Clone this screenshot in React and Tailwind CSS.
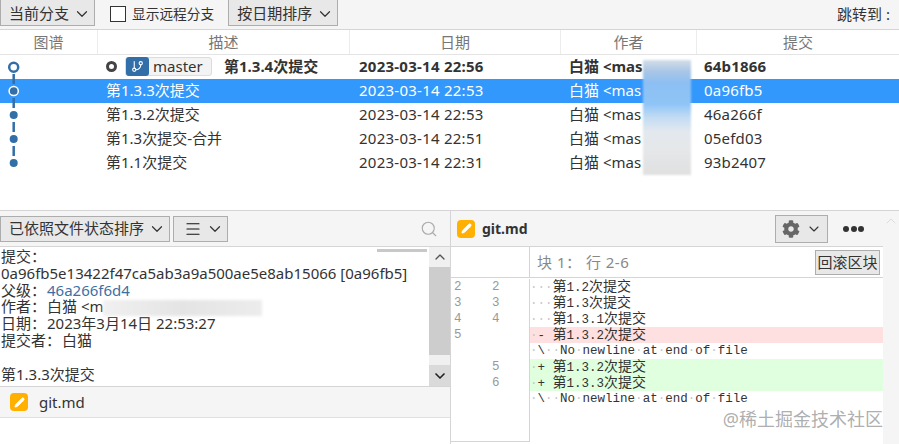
import { ChevronDown, ChevronUp, Search, Menu, Pencil, GitBranch } from "lucide-react";
import { FaCog } from "react-icons/fa";

const commits = [
  { msg: "第1.3.4次提交", date: "2023-03-14 22:56", hash: "64b1866", head: true },
  { msg: "第1.3.3次提交", date: "2023-03-14 22:53", hash: "0a96fb5", selected: true },
  { msg: "第1.3.2次提交", date: "2023-03-14 22:53", hash: "46a266f" },
  { msg: "第1.3次提交-合并", date: "2023-03-14 22:51", hash: "05efd03" },
  { msg: "第1.1次提交", date: "2023-03-14 22:31", hash: "93b2407" },
];

const diffLines = [
  { a: "2", b: "2", text: "···第1.2次提交" },
  { a: "3", b: "3", text: "···第1.3次提交" },
  { a: "4", b: "4", text: "···第1.3.1次提交" },
  { a: "5", b: "", text: "·- 第1.3.2次提交", bg: "bg-[#ffe0e0]" },
  { a: "", b: "", text: "·\\··No·newline·at·end·of·file" },
  { a: "", b: "5", text: "·+ 第1.3.2次提交", bg: "bg-[#dfffdf]" },
  { a: "", b: "6", text: "·+ 第1.3.3次提交", bg: "bg-[#dfffdf]" },
  { a: "", b: "", text: "·\\··No·newline·at·end·of·file" },
];

// whitespace dots are faint, chinese runs are a little larger than the mono text
function DiffText({ text }) {
  return text.split(/(·|[\u4e00-\u9fff]+)/).map((part, i) => {
    if (part === "·") return <span key={i} className="text-[#c8c8c8]">·</span>;
    if (/[\u4e00-\u9fff]/.test(part)) return <span key={i} className="text-[14px]">{part}</span>;
    return part;
  });
}

function ToolButton({ children, className = "" }) {
  return (
    <div className={`flex h-[26px] items-center justify-between border border-[#adadad] bg-[#e8e8e8] pl-2 pr-[3px] text-[15px] text-[#333] ${className}`}>
      {children}
      <ChevronDown size={18} strokeWidth={1.6} className="text-[#333]" />
    </div>
  );
}

function FileIcon() {
  return (
    <div className="flex h-[18px] w-[18px] shrink-0 items-center justify-center rounded-[4px] bg-[#ffb000]">
      <Pencil size={11} fill="#fff" strokeWidth={2} className="text-white" />
    </div>
  );
}

function Graph() {
  return (
    <svg width="28" height="120" viewBox="0 0 28 120" className="absolute left-0 top-[55px]">
      <path d="M13.7 19V29M13.7 43V53M13.7 67V77M13.7 91V101" stroke="#326fa8" strokeWidth="2.5" />
      <circle cx="13.7" cy="12.3" r="4.5" fill="#fff" stroke="#326fa8" strokeWidth="2.5" />
      <circle cx="13.7" cy="36" r="4.6" fill="#326fa8" stroke="#fff" strokeWidth="1.5" />
      <circle cx="13.7" cy="60" r="4" fill="#326fa8" />
      <circle cx="13.7" cy="84" r="4" fill="#326fa8" />
      <circle cx="13.7" cy="108" r="4" fill="#326fa8" />
    </svg>
  );
}

function CommitRow({ c }) {
  const tone = c.selected ? "bg-[#3398fc] text-white" : "text-[#333]";
  return (
    <div className={`flex h-6 items-center whitespace-nowrap pb-[2px] text-[15px] ${tone} ${c.head ? "font-bold text-[#111]" : ""}`}>
      <div className="w-[106px] shrink-0" />
      <div className="flex w-[253px] shrink-0 items-center">
        {c.head && (
          <>
            <span className="h-[11px] w-[11px] rounded-full border-[3px] border-[#444]" />
            <span className="ml-[8px] mr-[12px] flex h-[19px] w-[87px] items-center rounded-[3px] border border-[#dcdcdc] bg-[#f3f3f3] text-[15px] font-normal">
              <span className="flex h-[19px] w-[23px] shrink-0 items-center justify-center rounded-[3px] bg-[#326fa8]">
                <GitBranch size={13} className="text-white" />
              </span>
              <span className="ml-[4px] text-[#333]">master</span>
            </span>
          </>
        )}
        {c.msg}
      </div>
      <div className="w-[210px] shrink-0 tracking-[0.25px]">{c.date}</div>
      <div className="w-[135px] shrink-0">白猫 &lt;mas</div>
      <div className="tracking-[0.2px]">{c.hash}</div>
    </div>
  );
}

export default function App() {
  return (
    <div className="relative flex h-[444px] w-[899px] flex-col overflow-hidden bg-white font-['Noto_Sans','Noto_Sans_CJK_SC',sans-serif] text-[#333]">
      {/* top toolbar */}
      <div className="flex h-[30px] shrink-0 items-start border-b border-[#d5d5d5] bg-[#f5f5f5]">
        <ToolButton className="w-[95px] border-t-0 pt-[2px]">当前分支</ToolButton>
        <div className="ml-[15px] mt-[6px] h-4 w-4 border border-[#333] bg-white" />
        <span className="ml-[6px] mt-[4px] text-[13.7px]">显示远程分支</span>
        <ToolButton className="ml-[14px] w-[110px] border-t-0 pt-[2px]">按日期排序</ToolButton>
        <span className="ml-auto mr-[9px] mt-[3px] text-[15px]">跳转到 :</span>
      </div>

      {/* column headers */}
      <div className="flex h-[25px] shrink-0 items-center border-b border-[#e4e4e4] text-center text-[15px] text-[#777]">
        <div className="w-[98px] border-r border-[#ececec] leading-[24px]">图谱</div>
        <div className="w-[252px] border-r border-[#ececec] leading-[24px]">描述</div>
        <div className="w-[211px] border-r border-[#ececec] leading-[24px]">日期</div>
        <div className="w-[136px] border-r border-[#ececec] leading-[24px]">作者</div>
        <div className="flex-1 leading-[24px]">提交</div>
      </div>

      {/* commit list */}
      <div className="h-[155px] shrink-0 overflow-hidden">
        {commits.map((c) => (
          <CommitRow key={c.hash} c={c} />
        ))}
      </div>
      <Graph />
      <div className="absolute left-[643px] top-[60px] h-[115px] w-[48px] bg-[linear-gradient(180deg,#d3dde8_0%,#a9c6e6_10%,#8dbff3_20%,#8fc4f7_38%,#c3dcf3_50%,#e2e8ee_62%,#e6e8ea_75%,#e0e0e0_100%)] blur-[1px]" />

      {/* bottom panes */}
      <div className="flex min-h-0 flex-1 border-t border-[#d5d5d5]">
        {/* left pane */}
        <div className="flex w-[451px] shrink-0 flex-col border-r border-[#d5d5d5]">
          <div className="flex h-[36px] shrink-0 items-center gap-[3px] border-b border-[#d5d5d5] bg-[#f5f5f5]">
            <ToolButton className="h-7 w-[170px]">已依照文件状态排序</ToolButton>
            <ToolButton className="h-7 w-[55px] pl-[10px]">
              <Menu size={18} strokeWidth={1.6} className="text-[#111]" />
            </ToolButton>
            <Search size={18} strokeWidth={1.5} className="ml-auto mr-[12px] text-[#aaa]" />
          </div>

          <div className="flex h-[140px] shrink-0 border-b border-[#d5d5d5]">
            <div className="relative flex-1 overflow-hidden whitespace-nowrap px-[1px] pt-[1px] text-[15px] leading-[16.8px]">
              <div>提交&#xFF1A;</div>
              <div>0a96fb5e13422f47ca5ab3a9a500ae5e8ab15066 [0a96fb5]</div>
              <div>父级&#xFF1A;<span className="ml-px text-[#3d6fa5]">46a266f6d4</span></div>
              <div>作者&#xFF1A;<span className="ml-px">白猫 &lt;m</span></div>
              <div>日期&#xFF1A;<span className="ml-px">2023年3月14日 22:53:27</span></div>
              <div>提交者&#xFF1A;<span className="ml-px">白猫</span></div>
              <div className="h-[16.8px]" />
              <div>第1.3.3次提交</div>
              <div className="absolute left-[103px] top-[53px] h-4 w-[159px] bg-[linear-gradient(90deg,#f0f0f0,#e4e4e4_50%,#ececec)] blur-[1.5px]" />
              <div className="absolute left-[377px] top-[2px] h-[3px] w-[50px] bg-[#c8c8c8] blur-[0.5px]" />
            </div>
            <div className="flex w-[21px] shrink-0 flex-col bg-[#f0f0f0]">
              <div className="flex h-[20px] items-center justify-center">
                <ChevronUp size={16} strokeWidth={2} className="text-[#555]" />
              </div>
              <div className="h-[88px] bg-[#cdcdcd]" />
              <div className="mt-auto flex h-[21px] items-center justify-center bg-[#dadada]">
                <ChevronDown size={16} strokeWidth={2.5} className="text-[#222]" />
              </div>
            </div>
          </div>

          <div className="flex h-[31px] shrink-0 items-center gap-[11px] border-b border-[#e0e0e0] bg-[#f5f5f5] pl-[10px] text-[15px]">
            <FileIcon />
            <span>git.md</span>
          </div>
        </div>

        {/* right pane */}
        <div className="flex min-w-0 flex-1">
          <div className="flex min-w-0 flex-1 flex-col">
            <div className="flex h-[36px] shrink-0 items-center border-b border-[#d5d5d5] bg-[#f5f5f5] pl-[6px]">
              <FileIcon />
              <span className="ml-[7px] text-[14px] font-bold">git.md</span>
              <div className="ml-auto flex h-[28px] w-[53px] items-center justify-center gap-[6px] border border-[#adadad] bg-[#e8e8e8]">
                <FaCog size={18} className="text-[#666]" />
                <ChevronDown size={16} strokeWidth={1.6} />
              </div>
              <div className="ml-[15px] mr-[19px] flex gap-[1.5px]">
                <span className="h-[6px] w-[6px] rounded-full bg-[#333]" />
                <span className="h-[6px] w-[6px] rounded-full bg-[#333]" />
                <span className="h-[6px] w-[6px] rounded-full bg-[#333]" />
              </div>
            </div>

            <div className="flex h-[31px] shrink-0 items-center border-b border-[#d5d5d5]">
              <div className="h-full w-[79px] shrink-0 border-r border-[#d5d5d5]" />
              <span className="ml-[7px] text-[15px] tracking-[0.5px] text-[#888]">块 1&#xFF1A; 行 2-6</span>
              <div className="ml-auto mr-[3px] flex h-[25px] w-[65px] items-center justify-center border border-[#adadad] bg-[#e8e8e8] text-[15px]">
                回滚区块
              </div>
            </div>

            <div className="flex-1 pt-[1px] font-['Liberation_Mono','Noto_Sans_CJK_SC',monospace] text-[12.5px] leading-[16px]">
              {diffLines.map((l, i) => (
                <div key={i} className="flex h-4 items-center">
                  <div className="flex h-4 w-[79px] shrink-0 border-r border-[#d5d5d5] text-[#999]">
                    <span className="ml-[3px] w-[38px]">{l.a}</span>
                    <span>{l.b}</span>
                  </div>
                  <div className={`h-4 flex-1 whitespace-pre text-[#333] ${l.bg ?? ""}`}>
                    <DiffText text={l.text} />
                  </div>
                </div>
              ))}
              <div className="h-[35px] w-[79px] border-b border-r border-[#d5d5d5]" />
            </div>
          </div>

          <div className="flex w-4 shrink-0 justify-center bg-[#f5f5f5] pt-[2px]">
            <ChevronUp size={16} strokeWidth={1.5} className="text-[#dcdcdc]" />
          </div>
        </div>
      </div>

      {/* site watermark */}
      <div className="absolute bottom-[12px] right-4 text-[18px] leading-[26px] text-[#999]/80">@稀土掘金技术社区</div>
    </div>
  );
}
